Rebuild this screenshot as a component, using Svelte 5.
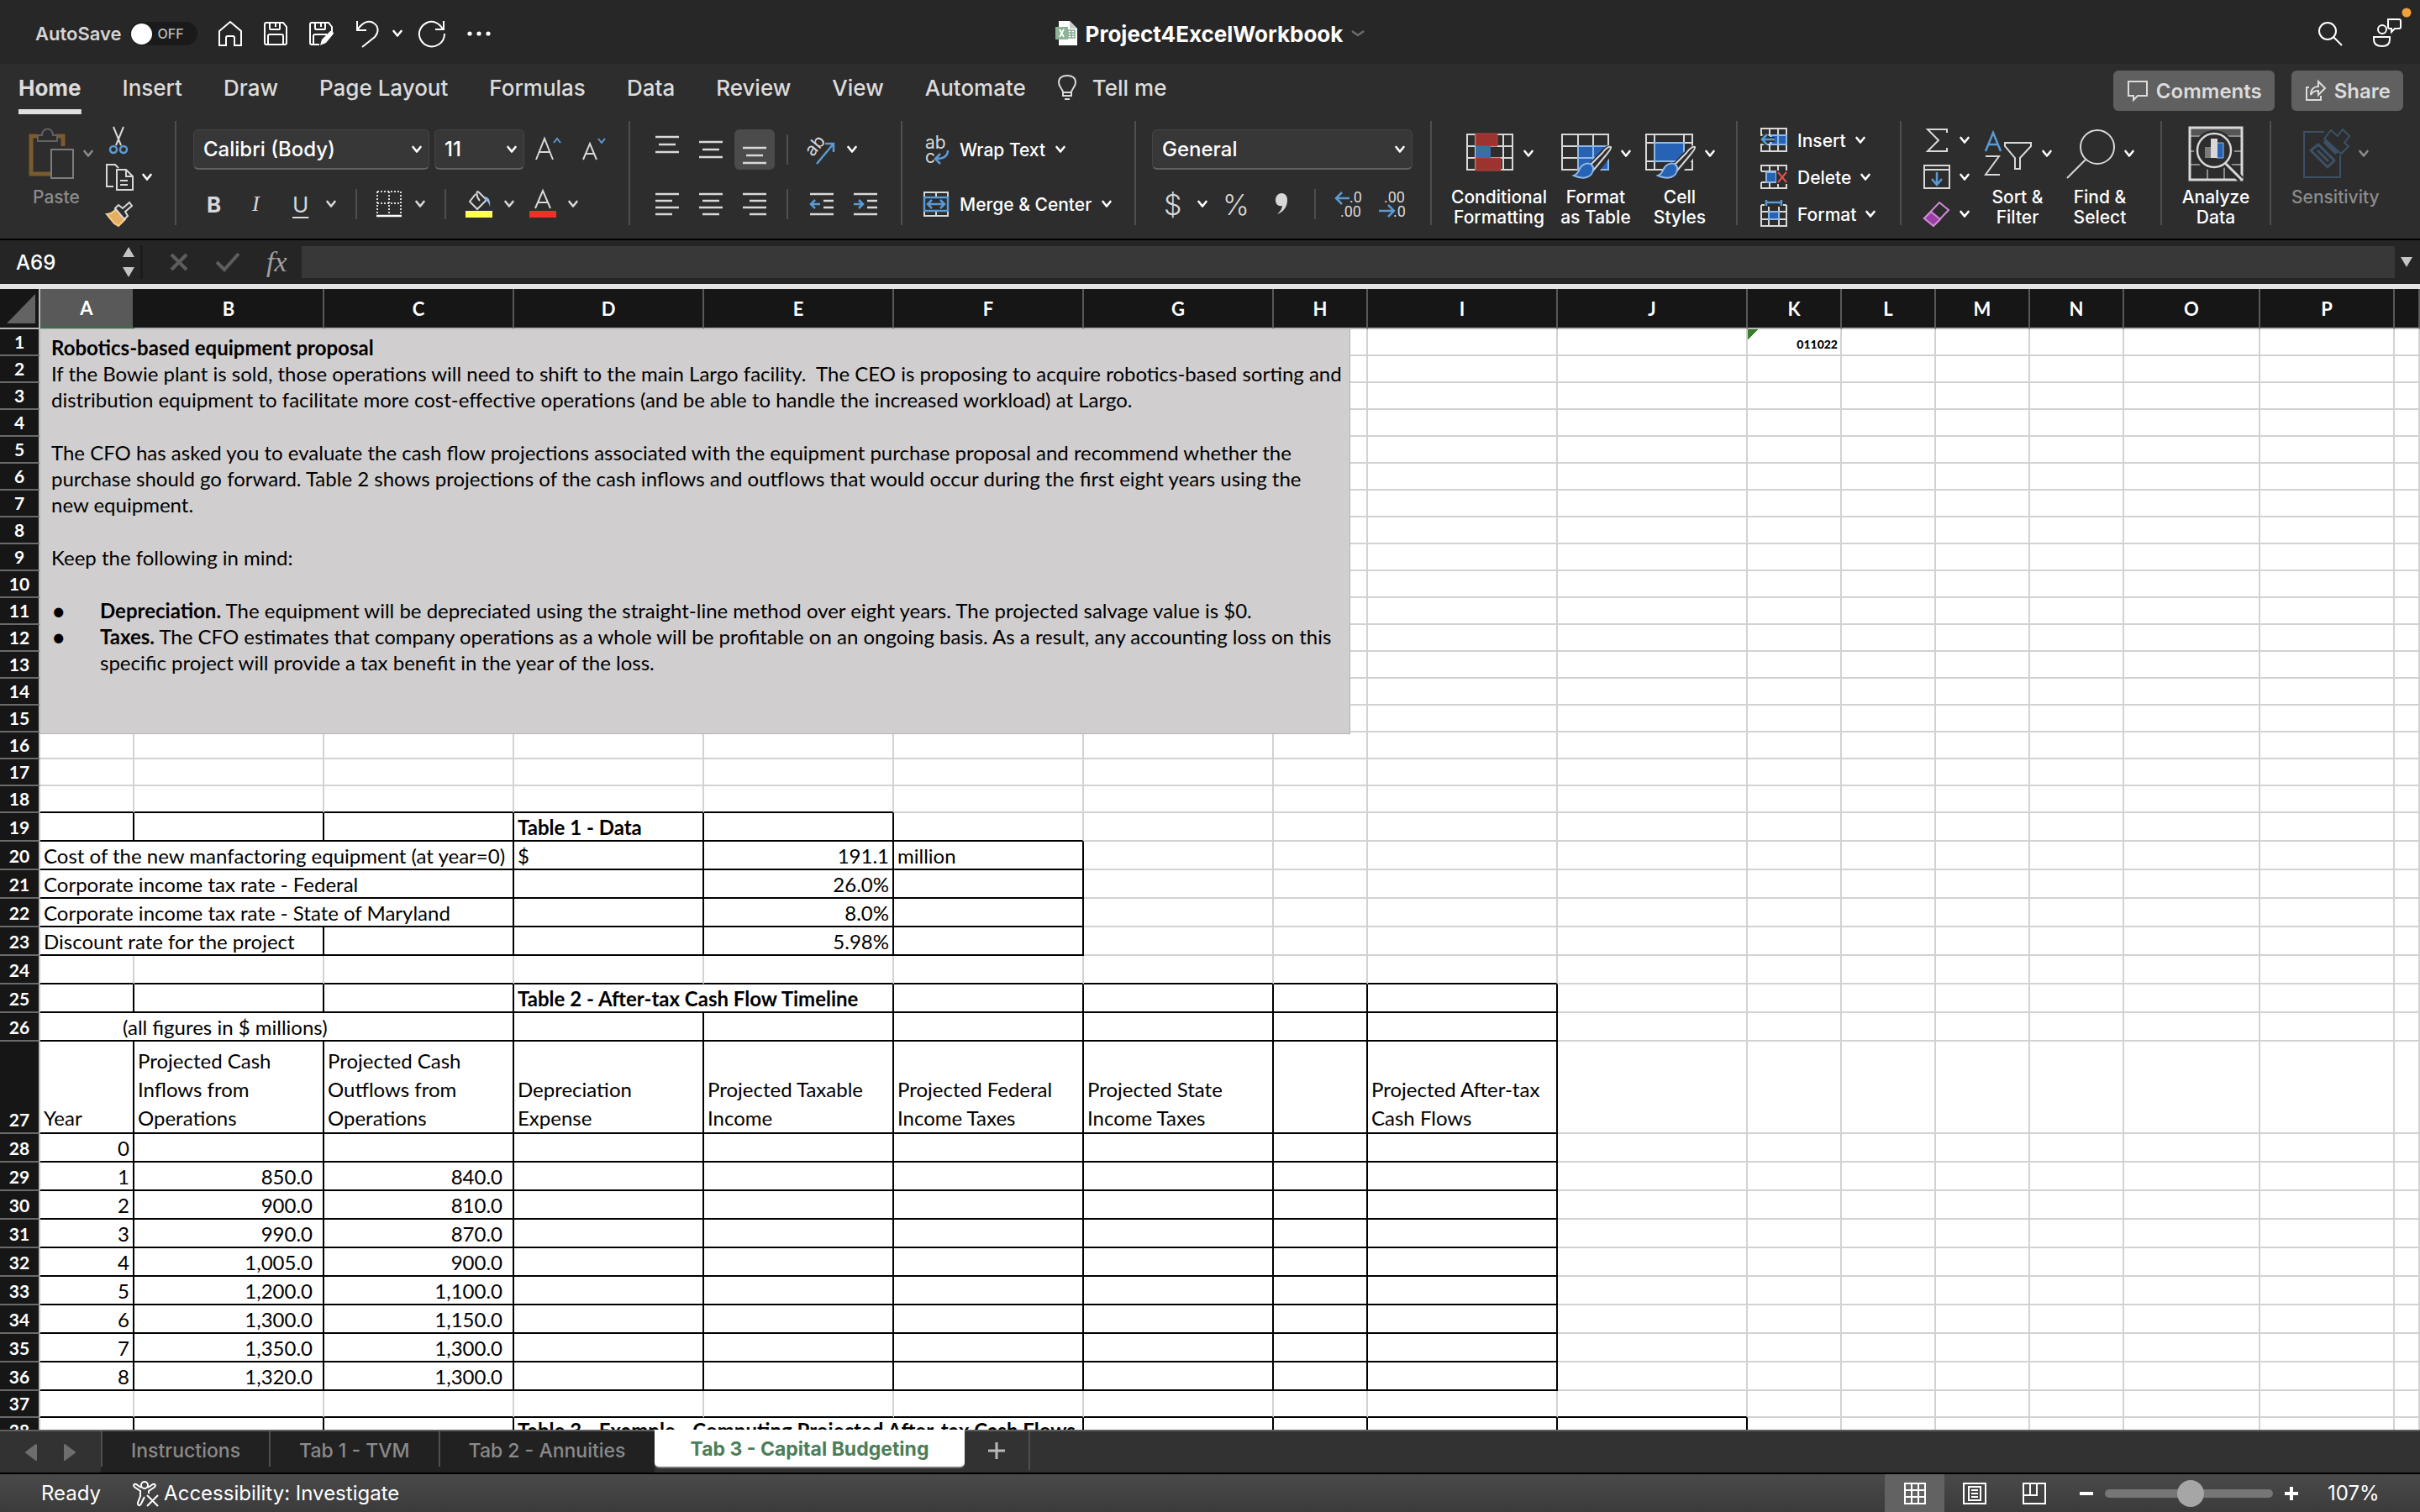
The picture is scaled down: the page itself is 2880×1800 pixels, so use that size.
<script lang="ts">
    type Cell = { text: string, span?: number, className?: string };

    const menus: string[] = ["Home", "Insert", "Draw", "Page Layout", "Formulas", "Data", "Review", "View", "Automate"];
    const sheets: string[] = ["Instructions", "Tab 1 - TVM", "Tab 2 - Annuities", "Tab 3 - Capital Budgeting"];
    const columns: string[] = "ABCDEFGHIJKLMNOP".split('');

    let activeMenu: string = "Home";
    let activeSheet: string = "Tab 3 - Capital Budgeting";
    let autoSave: boolean = false;
    let zoom: number = 107;
    let formula: string = "";

    // cell content by row number, then by column index
    const content: Record<number, Record<number, Cell>> = {
        1: { 10: { text: "011022", className: "right version" } },
        19: { 3: { text: "Table 1 - Data", className: "bold" } },
        20: {
            0: { text: "Cost of the new manfactoring equipment (at year=0)", span: 3 },
            3: { text: "$" },
            4: { text: "191.1", className: "right" },
            5: { text: "million" }
        },
        21: { 0: { text: "Corporate income tax rate - Federal", span: 3 }, 4: { text: "26.0%", className: "right" } },
        22: { 0: { text: "Corporate income tax rate - State of Maryland", span: 3 }, 4: { text: "8.0%", className: "right" } },
        23: { 0: { text: "Discount rate for the project", span: 2 }, 4: { text: "5.98%", className: "right" } },
        25: { 3: { text: "Table 2 - After-tax Cash Flow Timeline", span: 2, className: "bold" } },
        26: { 0: { text: "(all figures in $ millions)", span: 3, className: "indent" } },
        27: {
            0: { text: "Year" },
            1: { text: "Projected Cash\nInflows from\nOperations" },
            2: { text: "Projected Cash\nOutflows from\nOperations" },
            3: { text: "Depreciation\nExpense" },
            4: { text: "Projected Taxable\nIncome" },
            5: { text: "Projected Federal\nIncome Taxes" },
            6: { text: "Projected State\nIncome Taxes" },
            8: { text: "Projected After-tax\nCash Flows" }
        },
        38: { 3: { text: "Table 3 - Example - Computing Projected After-tax Cash Flows", span: 3, className: "bold" } }
    };

    const flows: string[][] = [
        ["", ""],
        ["850.0", "840.0"],
        ["900.0", "810.0"],
        ["990.0", "870.0"],
        ["1,005.0", "900.0"],
        ["1,200.0", "1,100.0"],
        ["1,300.0", "1,150.0"],
        ["1,350.0", "1,300.0"],
        ["1,320.0", "1,300.0"]
    ];

    flows.forEach((pair, year) => {
        content[28 + year] = {
            0: { text: year.toString(), className: "right" },
            1: { text: pair[0], className: "right figure" },
            2: { text: pair[1], className: "right figure" }
        };
    });

    // last column with a ruled bottom edge / a ruled right edge
    const lastBottom = (row: number): number => {
        if (row == 18) return 4;
        if (row >= 19 && row <= 23) return 5;
        if (row >= 24 && row <= 36) return 8;
        if (row == 37) return 9;
        return -1;
    };

    const lastRight = (row: number): number => {
        if (row == 19) return 4;
        if (row >= 20 && row <= 23) return 5;
        if (row >= 25 && row <= 36) return 8;
        if (row == 38) return 9;
        return -1;
    };

    const heightOf = (row: number): string => {
        if (row == 27) return "tall";
        return row <= 18 || row >= 37 ? "short" : "normal";
    };

    const rows = Array.from({ length: 38 }, (_, i) => {
        const number = i + 1;
        const cells = [];

        for (let col = 0; col < 17; col++) {
            const cell: Cell = (content[number] || {})[col] || { text: "" };
            const span = cell.span || 1;
            const last = col + span - 1;
            let className = cell.className || "";
            if (last <= lastBottom(number)) className += " rule-bottom";
            if (last <= lastRight(number)) className += " rule-right";
            cells.push({ text: cell.text, span: span, className: className });
            col = last;
        }

        return { number: number, height: heightOf(number), cells: cells };
    });
</script>

{#snippet chevron()}
    <svg class="chevron" width="12" height="10" viewBox="0 0 12 10"><path d="M1.5 2 6 7.5 10.500 2" fill="none" stroke="currentColor" stroke-width="2.600" stroke-linecap="round" stroke-linejoin="round" /></svg>
{/snippet}

{#snippet brush()}
    <path d="M59 22c-3-1-6 2-9 6L35 44l6 6 13-17c4-5 6-9 5-11z" fill="#2d2d2d" stroke="#2d2d2d" stroke-width="7" />
    <path d="M60 20c-3-1-7 3-10 7L34 43l5 5 15-18c4-5 7-8 6-10z" fill="#2d2d2d" stroke="#d8d8d8" stroke-width="2" />
    <path d="M30 40c5-2 10 2 9 7-1 8-10 13-23 7 8-3 5-12 14-14z" fill="#2862b4" stroke="#8db9e8" stroke-width="2" />
{/snippet}

<div class="app">
    <header class="titlebar">
        <div class="quick">
            <label class="autosave">
                <span>AutoSave</span>
                <span class="switch"><input type="checkbox" bind:checked={autoSave} /><i></i><b>{autoSave ? "ON" : "OFF"}</b></span>
            </label>
            <button aria-label="Home"><svg width="30" height="32" viewBox="0 0 30 32"><path d="M2 13 15 2l13 11v17h-8V21q0-2-2-2h-6q-2 0-2 2v9H2z" /></svg></button>
            <button aria-label="Save"><svg width="30" height="32" viewBox="0 0 30 32"><path d="M2 5q0-2 2-2h20l4 5v19q0 2-2 2H4q-2 0-2-2zM8 3v7q0 1 1 1h10q1 0 1-1V3M15 4v4M6 29V19q0-2 2-2h14q2 0 2 2v10" /></svg></button>
            <button aria-label="Save as"><svg width="32" height="32" viewBox="0 0 32 32"><path d="M13 29H4q-2 0-2-2V5q0-2 2-2h20l4 5v6M8 3v7q0 1 1 1h10q1 0 1-1V3M15 4v4M6 29V19q0-2 2-2h14" /><path d="m14 30 2-7 10-10q3-1 4 3l-9 11z" fill="#fff" stroke="none" /></svg></button>
            <button aria-label="Undo"><svg width="28" height="34" viewBox="0 0 28 34"><path d="M2 2v11h11M2 13C8 4 15 1 21 4c7 4 7 11 2 17L8 33" /></svg></button>
            <button class="more" aria-label="Undo history">{@render chevron()}</button>
            <button aria-label="Redo"><svg width="34" height="34" viewBox="0 0 34 34"><path d="M31 2v10H21M30 12C26 4 18 1 11 4 3 8 0 16 3 23c4 9 14 12 22 7 5-3 7-8 7-13" /></svg></button>
            <button aria-label="More commands"><svg width="30" height="8" viewBox="0 0 30 8"><circle cx="4" cy="4" r="2.600" /><circle cx="15" cy="4" r="2.600" /><circle cx="26" cy="4" r="2.600" /></svg></button>
        </div>
        <h1 class="document">
            <svg width="28" height="32" viewBox="0 0 28 32"><path d="M5 1h13l9 9v20H5z" fill="#fff" /><path d="M18 1v9h9z" fill="#c9c9c9" /><path d="M16 12h8v9h-8zM16 15h8M16 18h8M20 12v9" fill="none" stroke="#86ab90" stroke-width="1.500" /><rect x="1" y="8" width="15" height="15" fill="#8cb398" /><path d="m6 11 5 9M11 11l-5 9" stroke="#fff" stroke-width="1.800" /></svg>
            <span>Project4ExcelWorkbook</span>
            <svg width="18" height="10" viewBox="0 0 18 10"><path d="m2 2 7 5 7-5" fill="none" stroke="#6c6c6c" stroke-width="2.500" /></svg>
        </h1>
        <div class="account">
            <button aria-label="Search"><svg width="30" height="32" viewBox="0 0 30 32"><circle cx="12" cy="13" r="10" /><path d="m19 20 10 10" /></svg></button>
            <button aria-label="Presence"><svg width="44" height="48" viewBox="0 0 44 48"><path d="M18 15h13q2 0 2 2v7q0 2-2 2h-5l-4 4v-4h-2q-2 0-2-2z" /><circle cx="11" cy="27" r="5" /><path d="M1 36h19v3c0 6-4 8-9 8s-10-2-10-8z" /><circle cx="40" cy="7" r="4" fill="#f0a03c" stroke="#f0a03c" stroke-width="3" /></svg></button>
        </div>
    </header>

    <nav class="menubar">
        {#each menus as menu}
            <button class="menu" class:active={menu == activeMenu} on:click={() => activeMenu = menu}>{menu}</button>
        {/each}
        <button class="menu tell">
            <svg width="24" height="32" viewBox="0 0 24 32"><path d="M7 22c0-4-5-6-5-12C2 5 6 2 12 2s10 3 10 8c0 6-5 8-5 12zM7 22v4h10v-4M9 30h6" fill="none" stroke="currentColor" stroke-width="2" /></svg>
            Tell me
        </button>
        <div class="actions">
            <button class="action"><svg width="26" height="26" viewBox="0 0 26 26"><path d="M2 2h22v17H13l-5 5v-5H2z" /></svg>Comments</button>
            <button class="action"><svg width="26" height="26" viewBox="0 0 26 26"><path d="M5 9H2v15h17v-5M7 18c0-7 4-10 9-10V2l8 8-8 8v-5c-4 0-7 1-9 5z" /></svg>Share</button>
        </div>
    </nav>

    <div class="ribbon">
        <section class="group clipboard">
            <button class="big dim">
                <span class="pic"><svg width="56" height="62" viewBox="0 0 56 62"><path d="M12 10H4v45h24M34 10h8v12" fill="none" stroke="#7a5b2f" stroke-width="5" /><path d="M12 9h5c0-10 13-10 13 0h5v7H12z" fill="#2d2d2d" stroke="#626262" stroke-width="2" /><path d="M28 26h26v34H28z" fill="#2d2d2d" stroke="#7c7c7c" stroke-width="2" /></svg>{@render chevron()}</span>
                Paste
            </button>
            <div class="stack">
                <button aria-label="Cut"><svg width="32" height="34" viewBox="0 0 32 34"><path d="m10 1 9 22M22 1l-9 22" stroke="#d8d8d8" stroke-width="2" /><g fill="none" stroke="#5b9bd5" stroke-width="2.500"><circle cx="10" cy="28" r="4" /><circle cx="22" cy="28" r="4" /></g></svg></button>
                <button aria-label="Copy"><svg width="34" height="34" viewBox="0 0 34 34"><path d="M10 28H2V2h10l4 4M14 8h11l8 8v16H14zM25 8v8h8M18 21h9M18 26h9" fill="none" stroke="#d8d8d8" stroke-width="2" /></svg>{@render chevron()}</button>
                <button aria-label="Format painter"><svg width="34" height="32" viewBox="0 0 34 32"><path d="M2 16q6 0 11-6l11 12-8 8-5-3z" fill="#e5ae62" stroke="#f4cf8b" stroke-width="2" /><path d="m12 9 4-4 5 4 8-7 3 4-8 7 3 5-4 4z" fill="#2d2d2d" stroke="#d8d8d8" stroke-width="2" /></svg></button>
            </div>
        </section>

        <section class="group font">
            <div class="line">
                <label class="select name"><select aria-label="Font"><option>Calibri (Body)</option></select>{@render chevron()}</label>
                <label class="select size"><select aria-label="Font size"><option>11</option></select>{@render chevron()}</label>
                <button aria-label="Increase font size"><svg width="32" height="32" viewBox="0 0 32 32"><path d="M2 28 12 3l10 25M6 19h12" fill="none" stroke="#d8d8d8" stroke-width="2" /><path d="m23 8 4-5 4 5" fill="none" stroke="#5b9bd5" stroke-width="2" /></svg></button>
                <button aria-label="Decrease font size"><svg width="30" height="32" viewBox="0 0 30 32"><path d="m2 28 8-19 8 19M5 21h10" fill="none" stroke="#d8d8d8" stroke-width="2" /><path d="m20 3 4 5 4-5" fill="none" stroke="#5b9bd5" stroke-width="2" /></svg></button>
            </div>
            <div class="line styles">
                <button class="bold">B</button>
                <button class="italic">I</button>
                <button class="underline">U</button>
                {@render chevron()}
                <hr />
                <button aria-label="Borders"><svg width="30" height="32" viewBox="0 0 30 32"><path d="M1 1h28v28M1 1v28M1 15h28M15 1v28" fill="none" stroke="#d8d8d8" stroke-width="2" stroke-dasharray="2 2" /><path d="M0 30h30" stroke="#fff" stroke-width="2.500" /></svg></button>
                {@render chevron()}
                <hr />
                <button aria-label="Fill color"><svg width="32" height="34" viewBox="0 0 32 34"><path d="M12 5 5 14l9 9 11-11-9-9c-4-4-3 6 1 10" fill="none" stroke="#d8d8d8" stroke-width="2" /><path d="M22 8c6 0 8 5 7 12-1-4-3-7-5-8z" fill="#8db9e8" /><path d="M0 25h32v8H0z" fill="#ffff54" /></svg></button>
                {@render chevron()}
                <button aria-label="Font color"><svg width="32" height="34" viewBox="0 0 32 34"><path d="m7 22 9-21 9 21M10 15h12" fill="none" stroke="#d8d8d8" stroke-width="2" /><path d="M0 25h32v8H0z" fill="#ea3323" /></svg></button>
                {@render chevron()}
            </div>
        </section>

        <section class="group align">
            <div class="line aligns">
                <button aria-label="Top align"><svg width="28" height="36" viewBox="0 0 28 36"><path d="M0 3h28M4 12h20M0 21h28" /></svg></button>
                <button aria-label="Middle align"><svg width="28" height="36" viewBox="0 0 28 36"><path d="M0 9h28M4 18h20M0 27h28" /></svg></button>
                <button class="pressed" aria-label="Bottom align"><svg width="28" height="36" viewBox="0 0 28 36"><path d="M0 16h28M4 25h20M0 34h28" /></svg></button>
                <hr />
                <button aria-label="Orientation"><svg width="36" height="38" viewBox="0 0 36 38"><text x="4" y="27" transform="rotate(-50 7 24)" class="glyph">ab</text><path d="m12 36 20-24M22 12h10v10" class="blue" /></svg></button>
                {@render chevron()}
            </div>
            <div class="line aligns">
                <button aria-label="Align left"><svg width="28" height="28" viewBox="0 0 28 28"><path d="M0 2h28M0 10h20M0 18h28M0 26h20" /></svg></button>
                <button aria-label="Center"><svg width="28" height="28" viewBox="0 0 28 28"><path d="M0 2h28M4 10h20M0 18h28M4 26h20" /></svg></button>
                <button aria-label="Align right"><svg width="28" height="28" viewBox="0 0 28 28"><path d="M0 2h28M8 10h20M0 18h28M8 26h20" /></svg></button>
                <hr />
                <button aria-label="Decrease indent"><svg width="28" height="28" viewBox="0 0 28 28"><path d="M0 2h28M16 10h12M16 18h12M0 26h28" /><path d="M12 14H1M6 9l-5 5 5 5" class="blue" /></svg></button>
                <button aria-label="Increase indent"><svg width="28" height="28" viewBox="0 0 28 28"><path d="M0 2h28M16 10h12M16 18h12M0 26h28" /><path d="M0 14h11M6 9l5 5-5 5" class="blue" /></svg></button>
            </div>
        </section>

        <section class="group wrap">
            <button class="tool"><svg width="32" height="36" viewBox="0 0 32 36"><text x="3" y="17" class="glyph">ab</text><text x="3" y="34" class="glyph">c</text><path d="M30 19c0 8-6 10-14 10M21 23l-6 6 6 6" class="blue" /></svg>Wrap Text {@render chevron()}</button>
            <button class="tool"><svg width="32" height="32" viewBox="0 0 32 32"><path d="M2 7V2h28v5M2 25v5h28v-5M16 2v5M16 25v5" fill="none" stroke="#d8d8d8" stroke-width="2" /><path d="M2 8h28v16H2zM7 16h18M11 11l-5 5 5 5M21 11l5 5-5 5" class="blue" /></svg>Merge & Center {@render chevron()}</button>
        </section>

        <section class="group number">
            <div class="line">
                <label class="select format"><select aria-label="Number format"><option>General</option></select>{@render chevron()}</label>
            </div>
            <div class="line figures">
                <button class="sign">$</button>
                {@render chevron()}
                <button class="sign">%</button>
                <button aria-label="Comma style"><svg width="16" height="28" viewBox="0 0 16 28"><path d="M8 1c5 0 7 4 7 8 0 8-4 14-12 17 4-4 6-7 6-10C4 17 1 14 1 9c0-4 3-8 7-8z" fill="#d8d8d8" /></svg></button>
                <hr />
                <button aria-label="Increase decimal"><svg width="34" height="34" viewBox="0 0 34 34"><text x="17" y="15" class="digits">.0</text><text x="6" y="32" class="digits">.00</text><path d="M17 10H1M8 3l-7 7 7 7" class="blue" /></svg></button>
                <button aria-label="Decrease decimal"><svg width="34" height="34" viewBox="0 0 34 34"><text x="6" y="15" class="digits">.00</text><text x="17" y="32" class="digits">.0</text><path d="M0 25h17M11 18l7 7-7 7" class="blue" /></svg></button>
            </div>
        </section>

        <section class="group looks">
            <button class="big">
                <span class="pic"><svg width="60" height="56" viewBox="0 0 60 56"><path d="M3 5h54v42H3zM3 19h54M3 33h54M13 5v42M46 5v42" fill="none" stroke="#d8d8d8" stroke-width="2" /><path d="M13 4h26v15H13zM13 33h30v15H13z" fill="#9c332f" stroke="#b94540" /><path d="M13 19h18v14H13z" fill="#3b6ea5" /></svg>{@render chevron()}</span>
                Conditional<br />Formatting
            </button>
            <button class="big">
                <span class="pic"><svg width="62" height="56" viewBox="0 0 62 56"><path d="M2 5h55v42H2zM2 19h55M2 33h55M21 5v42M39 5v42" fill="none" stroke="#d8d8d8" stroke-width="2" /><path d="M21 19h36v28H21zM21 33h36M39 19v28" fill="#2862b4" stroke="#8db9e8" stroke-width="2" />{@render brush()}</svg>{@render chevron()}</span>
                Format<br />as Table
            </button>
            <button class="big">
                <span class="pic"><svg width="62" height="56" viewBox="0 0 62 56"><path d="M2 5h55v42H2zM2 15h55M2 37h55M12 5v42M47 5v42" fill="none" stroke="#d8d8d8" stroke-width="2" /><path d="M12 15h35v22H12z" fill="#2862b4" stroke="#8db9e8" stroke-width="2" />{@render brush()}</svg>{@render chevron()}</span>
                Cell<br />Styles
            </button>
        </section>

        <section class="group cells">
            <button class="tool"><svg width="34" height="32" viewBox="0 0 34 32"><path d="M2 2h30v27H2zM2 10h30M2 21h30M12 2v27M22 2v27" fill="none" stroke="#d8d8d8" stroke-width="2" /><path d="M14 10h18v11H14zM22 10v11" fill="#2862b4" stroke="#8db9e8" stroke-width="2" /><path d="M0 11h12v9H0z" fill="#2d2d2d" /><path d="M18 15H3M9 9l-6 6 6 6" fill="none" stroke="#2d2d2d" stroke-width="6" /><path d="M18 15H3M9 9l-6 6 6 6" class="blue" /></svg>Insert {@render chevron()}</button>
            <button class="tool"><svg width="34" height="32" viewBox="0 0 34 32"><path d="M2 9V2h30v7M2 22v7h30v-7M2 9h30M2 22h30M12 2v7M22 2v7M12 22v7M22 22v7" fill="none" stroke="#d8d8d8" stroke-width="2" /><path d="M8 10h12v12H8z" fill="#2862b4" stroke="#8db9e8" stroke-width="2" /><path d="M20 8h14v16H20z" fill="#2d2d2d" /><path d="m22 10 10 12M32 10 22 22" stroke="#e0524c" stroke-width="2" /></svg>Delete {@render chevron()}</button>
            <button class="tool"><svg width="34" height="34" viewBox="0 0 34 34"><path d="M2 6v25h30V6M2 14h30M2 23h30M11 8v23M23 8v23M2 6h4M28 6h4" fill="none" stroke="#d8d8d8" stroke-width="2" /><path d="M11 14h12v9H11z" fill="#2862b4" stroke="#8db9e8" stroke-width="2" /><path d="M8 3h18M8 0v7M26 0v7" class="blue" /></svg>Format {@render chevron()}</button>
        </section>

        <section class="group editing">
            <div class="stack">
                <button aria-label="AutoSum"><svg width="34" height="32" viewBox="0 0 34 32"><path d="M29 7V3H6l13 13L6 29h23v-4" fill="none" stroke="#d8d8d8" stroke-width="2" /></svg>{@render chevron()}</button>
                <button aria-label="Fill"><svg width="34" height="32" viewBox="0 0 34 32"><path d="M2 2h30v27H2zM2 7h30" fill="none" stroke="#d8d8d8" stroke-width="2" /><path d="M17 10v15M11 18l6 7 6-7" class="blue" /></svg>{@render chevron()}</button>
                <button aria-label="Clear"><svg width="34" height="32" viewBox="0 0 34 32"><path d="m20 2 11 9-18 19L2 21z" fill="none" stroke="#d28ad8" stroke-width="2" /><path d="m10 13 11 9-8 8L2 21z" fill="#9a3fa5" stroke="#d28ad8" stroke-width="2" /></svg>{@render chevron()}</button>
            </div>
            <button class="big">
                <span class="pic"><svg width="60" height="56" viewBox="0 0 60 56"><path d="m3 25 9-22 9 22M6 17h12" class="blue" /><path d="M3 31h16L3 53h17M26 15h31v4L44 33v13h-6V33L26 19z" fill="none" stroke="#d8d8d8" stroke-width="2" /></svg>{@render chevron()}</span>
                Sort &<br />Filter
            </button>
            <button class="big">
                <span class="pic"><svg width="60" height="60" viewBox="0 0 60 60"><circle cx="38" cy="22" r="20" fill="none" stroke="#d8d8d8" stroke-width="2" /><path d="M24 37 2 59" stroke="#d8d8d8" stroke-width="2" /></svg>{@render chevron()}</span>
                Find &<br />Select
            </button>
        </section>

        <section class="group analyze">
            <button class="big">
                <span class="pic"><svg width="66" height="66" viewBox="0 0 66 66"><path d="M2 3h62v8H2z" fill="#555" /><path d="M2 12h62M2 30h62M2 46h62M23 46v18M43 46v18" stroke="#8a8a8a" stroke-width="2" /><path d="M2 2h62v62H2z" fill="none" stroke="#d8d8d8" stroke-width="3" /><circle cx="31" cy="29" r="24" fill="#2d2d2d" /><path d="m43 42 20 22" stroke="#2d2d2d" stroke-width="8" /><circle cx="31" cy="29" r="20" fill="#2d2d2d" stroke="#d8d8d8" stroke-width="2.500" /><path d="m44 44 20 20" stroke="#d8d8d8" stroke-width="3" /><path d="M20 25h8v13h-8z" fill="#7b7b7b" /><path d="M34 20h8v18h-8z" fill="#2862b4" stroke="#8db9e8" /><path d="M27 15h8v23h-8z" fill="#d8d8d8" /></svg></span>
                Analyze<br />Data
            </button>
        </section>

        <section class="group sensitivity">
            <button class="big dim">
                <span class="pic"><svg width="58" height="62" viewBox="0 0 58 62"><path d="M27 5H3v54h43V33" fill="none" stroke="#3c5066" stroke-width="2" /><path d="m20 20 19 19-8 8-20-20zM19 27l13 13" fill="none" stroke="#3c5066" stroke-width="3" /><path d="m27 13 8-10 8 7 6-8 8 8-6 8 5 4-9 9z" fill="#2d2d2d" stroke="#3c5066" stroke-width="2" /><path d="m29 13 15 16-4 3-14-14z" fill="#3c5066" /></svg>{@render chevron()}</span>
                Sensitivity
            </button>
        </section>
    </div>

    <div class="formulabar">
        <div class="namebox">
            <input class="ref" aria-label="Name box" value="A69" />
            <svg width="16" height="40" viewBox="0 0 16 40"><path d="m8 2 7 12H1zM8 38l7-12H1z" fill="#c4c4c4" /></svg>
        </div>
        <button aria-label="Cancel"><svg width="24" height="24" viewBox="0 0 24 24"><path d="m3 3 18 18M21 3 3 21" fill="none" stroke="#5d5d5d" stroke-width="4" /></svg></button>
        <button aria-label="Enter"><svg width="30" height="24" viewBox="0 0 30 24"><path d="m2 12 9 9L28 2" fill="none" stroke="#5d5d5d" stroke-width="4" /></svg></button>
        <button class="fx">fx</button>
        <input class="formula" aria-label="Formula" bind:value={formula} />
        <button class="expand" aria-label="Expand formula bar"><svg width="16" height="14" viewBox="0 0 16 14"><path d="M1 1h14L8 13z" fill="#c4c4c4" /></svg></button>
    </div>

    <main class="sheet">
        <table>
            <colgroup>
                <col class="w-head" />
                {#each columns as column}
                    <col class={"AHKLMN".includes(column) ? "w-narrow" : column == "O" ? "w-o" : column == "P" ? "w-p" : "w-wide"} />
                {/each}
                <col />
            </colgroup>
            <thead>
                <tr>
                    <th class="corner"><svg width="34" height="36" viewBox="0 0 34 36"><path d="M34 0v35H0z" fill="#636363" /></svg></th>
                    {#each columns as column}
                        <th class:selected={column == "A"}>{column}</th>
                    {/each}
                    <th></th>
                </tr>
            </thead>
            <tbody>
                {#each rows as row}
                    <tr class={row.height}>
                        <th>{row.number}</th>
                        {#each row.cells as cell}
                            <td colspan={cell.span} class={cell.className}>{cell.text}</td>
                        {/each}
                    </tr>
                {/each}
            </tbody>
        </table>

        <!-- text box floating over rows 1 to 15 -->
        <article class="note">
            <p>
                <b>Robotics-based equipment proposal</b><br />
                If the Bowie plant is sold, those operations will need to shift to the main Largo facility.&nbsp; The CEO is proposing to acquire robotics-based sorting and<br />
                distribution equipment to facilitate more cost-effective operations (and be able to handle the increased workload) at Largo.
            </p>
            <p>
                The CFO has asked you to evaluate the cash flow projections associated with the equipment purchase proposal and recommend whether the<br />
                purchase should go forward. Table 2 shows projections of the cash inflows and outflows that would occur during the first eight years using the<br />
                new equipment.
            </p>
            <p>Keep the following in mind:</p>
            <ul>
                <li><b>Depreciation.</b> The equipment will be depreciated using the straight-line method over eight years. The projected salvage value is $0.</li>
                <li><b>Taxes.</b> The CFO estimates that company operations as a whole will be profitable on an ongoing basis. As a result, any accounting loss on this<br />specific project will provide a tax benefit in the year of the loss.</li>
            </ul>
        </article>
    </main>

    <nav class="sheetbar">
        <div class="steps">
            <button aria-label="Previous sheet"><svg width="16" height="22" viewBox="0 0 16 22"><path d="M14 2v18L2 11z" fill="#6e6e6e" stroke="#6e6e6e" stroke-width="2" stroke-linejoin="round" /></svg></button>
            <button aria-label="Next sheet"><svg width="16" height="22" viewBox="0 0 16 22"><path d="M2 2v18l12-9z" fill="#6e6e6e" stroke="#6e6e6e" stroke-width="2" stroke-linejoin="round" /></svg></button>
        </div>
        <div class="tabs">
            {#each sheets as sheet}
                <div class="slot" class:active={sheet == activeSheet}>
                    <button class="tab" on:click={() => activeSheet = sheet}>{sheet}</button>
                </div>
            {/each}
        </div>
        <button class="add" aria-label="Add sheet"><svg width="22" height="22" viewBox="0 0 22 22"><path d="M11 1v20M1 11h20" stroke="#b9b9b9" stroke-width="3" /></svg></button>
    </nav>

    <footer class="statusbar">
        <span>Ready</span>
        <button class="access">
            <svg width="32" height="32" viewBox="0 0 32 32"><circle cx="14" cy="6" r="4" /><path d="M10 9 4 5C1 4 0 7 3 9l6 4v6L6 27c0 4 3 4 4 1l4-8M18 9l6-4c3-1 4 2 1 4l-6 4v3M17 18l13 13M30 18 17 31" /></svg>
            Accessibility: Investigate
        </button>
        <div class="views">
            <button class="view current" aria-label="Normal view"><svg width="28" height="28" viewBox="0 0 28 28"><path d="M2 2h24v24H2zM2 10h24M2 18h24M10 2v24M18 2v24" /></svg></button>
            <button class="view" aria-label="Page layout view"><svg width="28" height="28" viewBox="0 0 28 28"><path d="M1 2h26v24H1zM7 6h14v16H7zM10 10h8M10 14h8M10 18h8" /></svg></button>
            <button class="view" aria-label="Page break view"><svg width="28" height="28" viewBox="0 0 28 28"><path d="M1 2h26v24H1zM1 16h16V2M9 2v14" /></svg></button>
        </div>
        <button class="zoomstep" aria-label="Zoom out" on:click={() => zoom -= 10}><svg width="18" height="18" viewBox="0 0 18 18"><path d="M1 9h16" stroke-width="4" /></svg></button>
        <input class="zoom" type="range" min="4" max="206" aria-label="Zoom" bind:value={zoom} />
        <button class="zoomstep" aria-label="Zoom in" on:click={() => zoom += 10}><svg width="18" height="18" viewBox="0 0 18 18"><path d="M1 9h16M9 1v16" stroke-width="4" /></svg></button>
        <span class="percent">{zoom}%</span>
    </footer>
</div>

<style>
    :global(body) {
        margin: 0;
        background-color: #272727;
    }

    .app {
        display: flex;
        flex-direction: column;
        height: 100vh;
        overflow: hidden;
        font-family: Inter, "Liberation Sans", sans-serif;
        font-size: 21px;
        font-weight: 500;
        color: #fff;
    }

    button, input, select {
        font: inherit;
        color: inherit;
        background: none;
        border: none;
        padding: 0;
        margin: 0;
    }

    button {
        display: flex;
        flex: none;
        align-items: center;
        justify-content: center;
        white-space: nowrap;
    }

    svg {
        display: block;
        flex: none;
        overflow: visible;
    }

    hr {
        width: 2px;
        height: 36px;
        margin: 0;
        border: none;
        background-color: #4e4e4e;
    }

    .blue {
        fill: none;
        stroke: #5b9bd5;
        stroke-width: 2.5;
    }

    .glyph {
        font-size: 21px;
        font-weight: 400;
        fill: #d8d8d8;
        stroke: none;
    }

    .digits {
        font-family: Roboto, sans-serif;
        font-size: 18px;
        font-weight: 400;
        fill: #d8d8d8;
    }

    /* title bar */

    .titlebar {
        display: grid;
        grid-template-columns: 1fr auto 1fr;
        align-items: center;
        height: 76px;
        padding-top: 4px;
        box-sizing: border-box;
        background-color: #272727;
    }

    .quick {
        display: flex;
        align-items: center;
        gap: 24px;
        padding-left: 42px;
    }

    .quick svg, .account svg {
        fill: none;
        stroke: #fff;
        stroke-width: 2;
    }

    .quick circle {
        fill: #fff;
        stroke: none;
    }

    .quick .more {
        margin-left: -8px;
        margin-right: -6px;
    }

    .autosave {
        display: flex;
        align-items: center;
        gap: 10px;
        font-size: 22px;
        font-weight: 600;
        color: #d4d4d4;
    }

    .switch {
        display: flex;
        align-items: center;
        gap: 7px;
        width: 80px;
        height: 28px;
        border-radius: 14px;
        background-color: #1a1a1a;
    }

    .switch input {
        appearance: none;
        width: 0;
    }

    .switch i {
        width: 25px;
        height: 25px;
        margin-left: -6px;
        border-radius: 50%;
        background-color: #fff;
    }

    .switch b {
        font-size: 16px;
        font-weight: 500;
        color: #bdbdbd;
    }

    .document {
        display: flex;
        align-items: center;
        gap: 9px;
        margin: 0;
        font-size: 26px;
        font-weight: 700;
    }

    .account {
        display: flex;
        align-items: center;
        justify-content: flex-end;
        gap: 36px;
        padding-right: 12px;
    }

    .account button:last-child svg {
        margin-top: -16px;
    }

    /* menu bar */

    .menubar {
        display: flex;
        align-items: center;
        gap: 49px;
        height: 64px;
        padding: 0 20px 0 22px;
        background-color: #2d2d2d;
        color: #dcdcdc;
        font-size: 24px;
    }

    .menu {
        height: 56px;
        box-sizing: border-box;
        padding-bottom: 4px;
        border-bottom: 6px solid transparent;
        border-top: 2px solid transparent;
        font-size: 26px;
    }

    .menu.active {
        font-weight: 700;
        background: linear-gradient(#e0e0e0, #e0e0e0) bottom / 100% 6px no-repeat border-box;
    }

    .tell {
        gap: 18px;
        margin-left: -12px;
    }

    .actions {
        display: flex;
        gap: 20px;
        margin-left: auto;
    }

    .action {
        gap: 9px;
        height: 48px;
        padding: 0 15px 0 16px;
        border-radius: 6px;
        background-color: #606060;
        font-weight: 600;
    }

    .action svg {
        fill: none;
        stroke: #dcdcdc;
        stroke-width: 2;
    }

    /* ribbon */

    .ribbon {
        display: flex;
        height: 124px;
        padding: 4px 0 16px;
        border-bottom: 2px solid #000;
        background-color: #2d2d2d;
    }

    .group {
        display: flex;
        flex: none;
        flex-direction: column;
        gap: 17px;
        box-sizing: border-box;
        padding-top: 10px;
        border-right: 2px solid #4e4e4e;
    }

    .line {
        display: flex;
        align-items: center;
        height: 48px;
    }

    .big {
        flex-direction: column;
        justify-content: flex-start;
        line-height: 24px;
    }

    .pic {
        display: flex;
        flex: none;
        align-items: center;
        gap: 10px;
        height: 66px;
        margin-bottom: 7px;
    }

    .dim {
        color: #8c8c8c;
    }

    .stack {
        display: flex;
        flex-direction: column;
        gap: 10px;
    }

    .stack button {
        justify-content: flex-start;
        gap: 10px;
        height: 34px;
    }

    .tool {
        justify-content: flex-start;
        gap: 12px;
        height: 48px;
    }

    .clipboard, .looks, .cells, .editing, .analyze, .sensitivity {
        padding-top: 6px;
    }

    .clipboard {
        flex-direction: row;
        gap: 14px;
        width: 210px;
        padding-left: 33px;
    }

    .clipboard .big {
        align-items: flex-start;
        text-indent: 6px;
    }

    .font {
        width: 540px;
        padding-left: 20px;
    }

    .font .line {
        gap: 6px;
    }

    .font .line button:nth-of-type(1) {
        margin-left: 6px;
    }

    .font .line button:nth-of-type(2) {
        margin-left: 18px;
    }

    .font .styles {
        display: grid;
        grid-template-columns: 54px 48px 40px 35px 25px 46px 35px 25px 46px 30px 46px 12px;
        gap: 0;
        justify-items: start;
        padding-left: 16px;
        color: #d8d8d8;
    }

    .font .styles button:nth-of-type(n) {
        margin-left: 0;
    }

    .styles button {
        font-size: 26px;
    }

    .styles .bold {
        font-weight: 700;
    }

    .styles .italic {
        font-family: "Liberation Serif", serif;
        font-style: italic;
    }

    .styles .underline {
        font-weight: 400;
        text-decoration: underline;
        text-decoration-thickness: 2px;
        text-underline-offset: 5px;
    }

    .select {
        position: relative;
        display: flex;
        align-items: center;
        height: 48px;
        box-sizing: border-box;
        border: 1px solid #454545;
        border-bottom: 2px solid #616161;
        border-radius: 6px;
        background-color: #373737;
        font-size: 24px;
    }

    .select select {
        appearance: none;
        width: 100%;
        padding-left: 11px;
    }

    .select .chevron {
        position: absolute;
        right: 8px;
    }

    .select.name {
        width: 281px;
    }

    .select.size {
        width: 107px;
    }

    .align {
        width: 324px;
        padding-left: 20px;
    }

    .aligns {
        display: grid;
        grid-template-columns: 48px 56px 48px 30px 52px 52px;
        justify-items: center;
    }

    .aligns button {
        width: 48px;
        height: 48px;
        border-radius: 6px;
    }

    .aligns .pressed {
        background-color: #4b4b4b;
    }

    .aligns :global(.chevron) {
        justify-self: start;
        margin-left: 4px;
    }

    .aligns svg:not(.chevron) {
        fill: none;
        stroke: #d8d8d8;
        stroke-width: 2.5;
    }

    .aligns svg .blue {
        stroke: #5b9bd5;
    }

    .wrap {
        width: 278px;
        padding-left: 24px;
    }

    .number {
        width: 352px;
        padding-left: 19px;
    }

    .select.format {
        width: 310px;
    }

    .figures {
        display: grid;
        grid-template-columns: 40px 30px 62px 47px 25px 52px 34px;
        justify-items: start;
        padding-left: 14px;
    }

    .sign {
        font-size: 34px;
        font-weight: 300;
        color: #d8d8d8;
    }

    .looks {
        flex-direction: row;
        gap: 16px;
        width: 364px;
        padding-left: 23px;
    }

    .cells {
        gap: 10px;
        width: 195px;
        padding-left: 26px;
    }

    .cells .tool {
        gap: 11px;
        height: 34px;
    }

    .editing {
        flex-direction: row;
        gap: 16px;
        width: 310px;
        padding-left: 25px;
    }

    .analyze {
        width: 130px;
        align-items: center;
    }

    .sensitivity {
        padding-left: 24px;
        border-right: none;
    }

    /* formula bar */

    .formulabar {
        display: flex;
        align-items: center;
        gap: 31px;
        height: 52px;
        padding-right: 8px;
        border-bottom: 6px solid #e4e4e4;
        background-color: #252525;
    }

    .namebox {
        display: flex;
        align-items: center;
        width: 148px;
        padding-left: 19px;
        border-right: 3px solid #1b1b1b;
        font-size: 24px;
    }

    .ref {
        width: 126px;
    }

    .fx {
        font-family: "Liberation Serif", serif;
        font-size: 34px;
        font-style: italic;
        color: #a0a0a0;
    }

    .formula {
        flex: 1;
        height: 38px;
        margin-left: -14px;
        background-color: #383838;
    }

    .expand {
        margin-left: -25px;
    }

    /* grid */

    .sheet {
        position: relative;
        flex: 1;
        min-height: 0;
        overflow: hidden;
        background-color: #fff;
        color: #000;
        font-family: Lato, "Liberation Sans", sans-serif;
        font-size: 24px;
        font-weight: 400;
    }

    table {
        width: 100%;
        min-width: 2000px;
        table-layout: fixed;
        border-collapse: separate;
        border-spacing: 0;
    }

    .w-head {
        width: 48px;
    }

    .w-narrow {
        width: 112px;
    }

    .w-wide {
        width: 226px;
    }

    .w-o {
        width: 162px;
    }

    .w-p {
        width: 160px;
    }

    th, td {
        box-sizing: border-box;
        padding: 0;
        vertical-align: bottom;
        line-height: 30px;
        white-space: pre;
    }

    th {
        background-color: #161616;
        color: #fff;
        font-size: 21px;
        font-weight: 700;
    }

    thead th {
        height: 48px;
        padding-top: 2px;
        vertical-align: middle;
        border-right: 2px solid #585858;
        border-bottom: 2px solid #b8b8b8;
        font-size: 22px;
    }

    thead .selected {
        border-right-color: #161616;
        border-bottom: 4px solid #3f6b48;
        background-color: #595959;
    }

    thead .corner {
        padding-left: 8px;
        border-right-color: #b8b8b8;
    }

    tbody th {
        border-right: 2px solid #c4c4c4;
        border-bottom: 2px solid #6a6a6a;
    }

    td {
        padding: 0 4px;
        border-right: 2px solid #d2d2d2;
        border-bottom: 2px solid #d2d2d2;
    }

    .short {
        height: 32px;
    }

    .normal {
        height: 34px;
    }

    .tall {
        height: 110px;
    }

    .tall td {
        line-height: 34px;
    }

    td.rule-bottom {
        border-bottom-color: #000;
    }

    td.rule-right {
        border-right-color: #000;
    }

    td.bold {
        font-weight: 700;
    }

    td.right {
        text-align: right;
    }

    td.figure {
        padding-right: 12px;
    }

    td.indent {
        padding-left: 98px;
    }

    td.version {
        background: linear-gradient(135deg, #3a7d2c 9px, transparent 9px);
        padding-right: 3px;
        font-size: 14px;
        font-weight: 900;
        line-height: 24px;
    }

    .note {
        position: absolute;
        top: 47px;
        left: 47px;
        width: 1560px;
        height: 483px;
        box-sizing: border-box;
        padding: 6px 13px;
        border: 1px solid #b5b3b4;
        background-color: #d0cecf;
        line-height: 31px;
        white-space: nowrap;
    }

    .note p {
        margin: 0 0 32px;
    }

    .note ul {
        margin: 0;
        padding-left: 58px;
        list-style: none;
    }

    .note li::before {
        content: "•";
        float: left;
        margin-left: -58px;
        font-size: 30px;
    }

    /* sheet tabs */

    .sheetbar {
        display: flex;
        height: 49px;
        border-top: 2px solid #5e5e5e;
        border-bottom: 2px solid #000;
        background-color: #323232;
        color: #8a8a8a;
        font-size: 23px;
    }

    .steps {
        display: flex;
        gap: 30px;
        width: 91px;
        padding-left: 29px;
    }

    .tabs {
        display: flex;
    }

    .slot {
        background-color: #212121;
    }

    .tab {
        height: 42px;
        padding: 4px 34px 0;
        border-left: 2px solid #4e4e4e;
    }

    .slot.active {
        background: none;
    }

    .slot.active .tab {
        height: 46px;
        margin-top: -2px;
        padding: 2px 43px 0;
        border-left: none;
        border-bottom: 2px solid #777;
        border-radius: 0 0 6px 6px;
        background-color: #fff;
        color: #4b7d57;
        font-weight: 700;
    }

    .add {
        width: 78px;
        height: 46px;
        border-right: 2px solid #4e4e4e;
    }

    /* status bar */

    .statusbar {
        display: flex;
        align-items: center;
        height: 45px;
        padding-left: 49px;
        background: linear-gradient(#4a4a4a, #3b3b3b);
        font-size: 24px;
        font-weight: 400;
    }

    .statusbar svg {
        fill: none;
        stroke: #fff;
        stroke-width: 2;
    }

    .access {
        gap: 5px;
        margin-left: 38px;
    }

    .views {
        display: flex;
        align-self: stretch;
        margin-left: auto;
    }

    .view {
        width: 71px;
    }

    .view.current {
        background-color: #626262;
    }

    .zoomstep {
        margin-left: 18px;
    }

    .zoomstep + .zoom {
        margin-left: 13px;
    }

    .zoom + .zoomstep {
        margin-left: 13px;
    }

    .zoom {
        appearance: none;
        width: 200px;
        height: 10px;
        border-radius: 5px;
        background-color: #767676;
    }

    .zoom::-webkit-slider-thumb {
        appearance: none;
        width: 32px;
        height: 32px;
        border-radius: 50%;
        background-color: #a6a6a6;
    }

    .percent {
        width: 110px;
        padding-left: 34px;
    }
</style>
